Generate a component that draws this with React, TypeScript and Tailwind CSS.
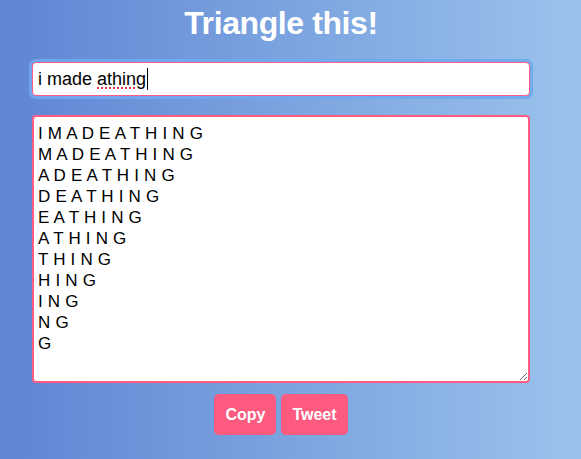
import { useState } from 'react'

// ── Helpers ────────────────────────────────────────────────────────────────

function triangle(text: string): string {
  const letters = text.replace(/\s+/g, '').toUpperCase().split('')
  return letters
    .map((_, i) => letters.slice(i).join(' '))
    .join('\n')
}

// ── App ────────────────────────────────────────────────────────────────────

export default function App() {
  const [text] = useState('i made athing')
  const output = triangle(text)

  return (
    <div
      className="min-h-[459px] w-full bg-gradient-to-r from-[#5f85d3] to-[#9ac3ec]"
      style={{ fontFamily: '"Liberation Sans", Arial, sans-serif' }}
    >
      <div className="w-[562px] flex flex-col items-center">
        <h1 className="mt-[3px] text-[32px] leading-[40px] font-bold text-white tracking-[-0.4px]">
          Triangle this!
        </h1>

        {/* Input (focused) */}
        <div className="mt-[19px] w-[498px] h-[34px] rounded-[4px] border border-[#ff5c84] bg-white shadow-[0_0_0_3px_rgba(112,168,240,0.9)] flex items-center px-[5px] text-[18px] text-black">
          <span>i made&nbsp;</span>
          <span className="underline decoration-dotted decoration-[#e0304a] decoration-2 underline-offset-[3px]">
            athing
          </span>
          <span className="w-px h-[22px] bg-black ml-px" />
        </div>

        {/* Triangle output */}
        <textarea
          readOnly
          value={output}
          spellCheck={false}
          className="mt-[19px] w-[498px] h-[268px] rounded-[4px] border-2 border-[#ff5c84] bg-white px-[4px] pt-[6px] text-[17px] leading-[21px] tracking-[0.2px] text-black outline-none"
          style={{ fontFamily: '"Liberation Sans", Arial, sans-serif' }}
        />

        {/* Actions */}
        <div className="mt-[11px] flex gap-[5px]">
          <button className="h-[41px] px-[11px] rounded-[5px] bg-[#fd5a80] text-white text-[16px] font-bold">
            Copy
          </button>
          <button className="h-[41px] px-[11px] rounded-[5px] bg-[#fd5a80] text-white text-[16px] font-bold">
            Tweet
          </button>
        </div>
      </div>
    </div>
  )
}
